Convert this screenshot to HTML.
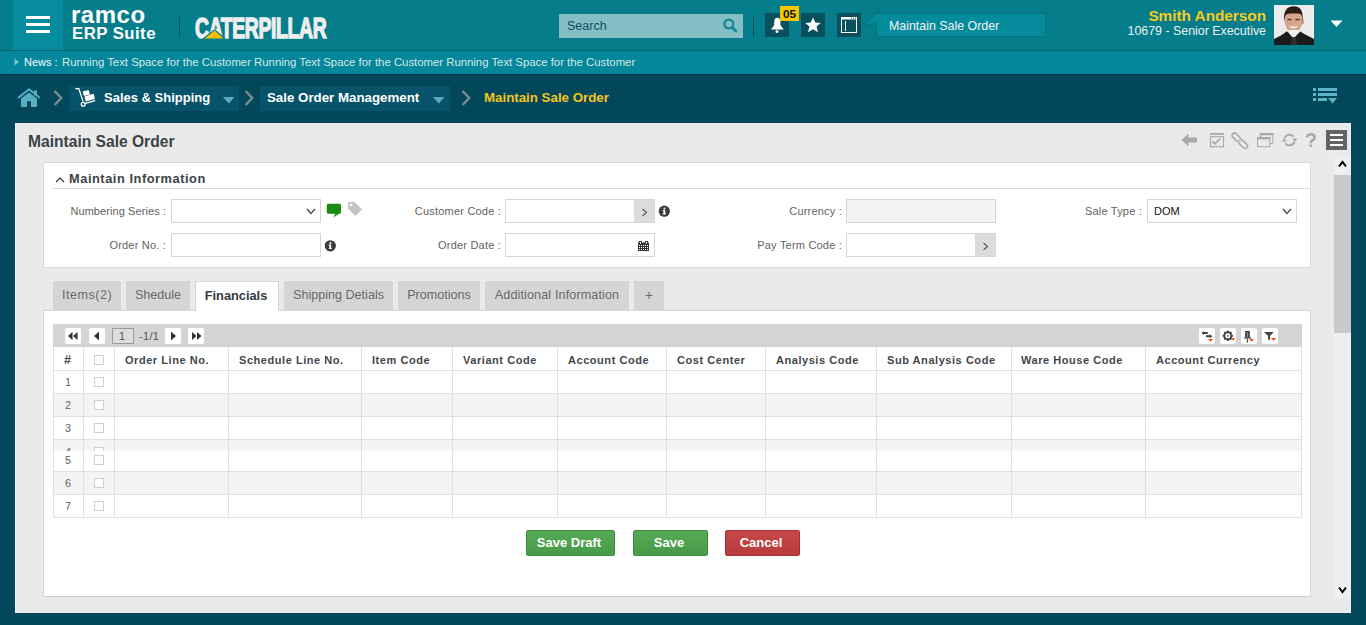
<!DOCTYPE html>
<html><head><meta charset="utf-8">
<style>
*{box-sizing:border-box;margin:0;padding:0}
html,body{width:1366px;height:625px;overflow:hidden;background:#03485a;font-family:"Liberation Sans",sans-serif}
.a{position:absolute}
#hdr{left:0;top:0;width:1366px;height:51px;background:#057d8b;border-bottom:1px solid #05616c}
#ham{left:13px;top:0;width:50px;height:50px;background:#068d9d}
#ham i{position:absolute;left:13px;width:24px;height:3px;background:#fff}
.txt{white-space:nowrap}
#news{left:0;top:51px;width:1366px;height:24px;background:#04879a;border-bottom:1px solid #023340}
#bc{left:0;top:74px;width:1366px;height:49px;background:#03485a}
.crumbbox{background:#07546a;height:25px}
#panel{left:15px;top:123px;width:1336px;height:490px;background:#eaeaea;border-left:1px solid #f6f6f6}
.lbl{position:absolute;font-size:11px;color:#626262;white-space:nowrap;text-align:right;letter-spacing:0.2px;margin-top:1px}
.inp{position:absolute;height:24px;width:150px;background:#fff;border:1px solid #d6d6d6}
.tab{position:absolute;top:281px;height:29px;background:#d5d5d5;font-size:12.6px;color:#6a6a6a;text-align:center;line-height:29px;white-space:nowrap}
.gh{position:absolute;top:354px;font-size:11px;font-weight:bold;color:#3f474c;letter-spacing:0.55px;white-space:nowrap}
.vl{position:absolute;top:347px;width:1px;height:170px;background:#e0e0e0}
.hl{position:absolute;left:53px;width:1248px;height:1px;background:#e0e0e0}
.rn{position:absolute;left:65px;font-size:11px;color:#626262;white-space:nowrap}
.cb{position:absolute;left:94px;width:10px;height:10px;border:1px solid #cfcfcf;background:#fff}
.btn{position:absolute;top:530px;height:26px;border-radius:2px;color:#fff;font-weight:bold;font-size:13px;text-align:center;line-height:23px;padding-right:3px}
.g{background:linear-gradient(#56aa56,#479a47);border:1px solid #3d8c3d}
.r{background:linear-gradient(#c84848,#b83b3b);border:1px solid #a83232}
.pbtn{position:absolute;top:328px;width:16px;height:16px;background:#fff;border-radius:2px}
</style></head><body>

<!-- HEADER -->
<div id="hdr" class="a"></div>
<div id="ham" class="a"><i style="top:16px"></i><i style="top:23px"></i><i style="top:30px"></i></div>
<div class="a txt" style="left:71px;top:1px;font-size:24px;font-weight:bold;color:#fff;line-height:28px;letter-spacing:0.5px">ramco</div>
<div class="a txt" style="left:72px;top:25px;font-size:16.8px;letter-spacing:0.45px;font-weight:bold;color:#fff;line-height:17px">ERP Suite</div>
<div class="a" style="left:179px;top:17px;width:1px;height:20px;background:#0b4f5c"></div>
<!-- caterpillar -->
<div class="a txt" style="left:195px;top:12px;font-size:29.5px;font-weight:bold;color:#eeeeee;line-height:31px;transform:scaleX(0.655);-webkit-text-stroke:1.5px #eeeeee;transform-origin:0 0;letter-spacing:-0.5px">CATERPILLAR</div>
<svg class="a" style="left:200px;top:26px" width="30" height="14"><polygon points="3,13 14.7,3.8 25,13" fill="#f5c000" stroke="#067f8c" stroke-width="1.2"/></svg>

<!-- search -->
<div class="a" style="left:559px;top:14px;width:184px;height:24px;background:#84bfc6"></div>
<div class="a txt" style="left:567px;top:19px;font-size:12.5px;color:#0f4f5c;line-height:15px">Search</div>
<svg class="a" style="left:720px;top:17px" width="20" height="20"><circle cx="8.8" cy="7" r="4.4" fill="none" stroke="#168592" stroke-width="2.3"/><line x1="12" y1="10.3" x2="15.8" y2="14" stroke="#168592" stroke-width="2.8" stroke-linecap="round"/></svg>
<div class="a" style="left:753px;top:17px;width:1px;height:20px;background:#0b4f5c"></div>
<!-- bell -->
<div class="a" style="left:765px;top:13px;width:24px;height:24px;background:#0a4f5e"></div>
<svg class="a" style="left:765px;top:13px" width="24" height="24"><path d="M12.3 4.8 C10.2 4.8 9.2 6.5 9.2 9 L9.2 12.3 L6 16.4 L18.8 16.4 L15.5 12.3 L15.5 9 C15.5 6.5 14.5 4.8 12.3 4.8 Z" fill="#fff"/><circle cx="12" cy="18.4" r="1.5" fill="#fff"/></svg>
<div class="a txt" style="left:780px;top:6px;width:19px;height:15px;background:#f6c700;color:#111;font-size:11.8px;font-weight:bold;text-align:center;line-height:16px">05</div>
<!-- star -->
<div class="a" style="left:801px;top:13px;width:24px;height:24px;background:#0a4f5e"></div>
<svg class="a" style="left:801px;top:13px" width="24" height="24"><polygon points="12,4.5 14.3,9.6 19.8,10 15.6,13.6 16.9,19.2 12,16.2 7.1,19.2 8.4,13.6 4.2,10 9.7,9.6" fill="#fff"/></svg>
<!-- window -->
<div class="a" style="left:837px;top:13px;width:24px;height:24px;background:#0a4f5e"></div>
<svg class="a" style="left:837px;top:13px" width="24" height="24"><rect x="4.5" y="4.5" width="15" height="15" fill="none" stroke="#fff" stroke-width="1"/><rect x="4" y="4" width="16" height="2.5" fill="#fff"/><rect x="8" y="8" width="1" height="10" fill="#fff"/><rect x="14" y="4.8" width="1" height="1" fill="#0a4f5e"/><rect x="16" y="4.8" width="1" height="1" fill="#0a4f5e"/><rect x="18" y="4.8" width="1" height="1" fill="#0a4f5e"/></svg>
<!-- tab pointer -->
<svg class="a" style="left:860px;top:12px" width="190" height="26"><path d="M16.5 1.5 L185.5 1.5 L185.5 24.5 L16.5 24.5 L16.5 10.8 L3.2 14.2 Z" fill="#058c9c" stroke="#06707c" stroke-width="1"/></svg>
<div class="a txt" style="left:889px;top:19px;font-size:12.4px;color:#f2f2f2;line-height:15px">Maintain Sale Order</div>
<!-- user -->
<div class="a txt" style="left:1066px;width:200px;top:7px;text-align:right;font-size:15.3px;font-weight:bold;color:#f7cb1e;line-height:17px">Smith Anderson</div>
<div class="a txt" style="left:1066px;width:200px;top:24px;text-align:right;font-size:12.4px;color:#f0f0f0;line-height:15px">10679 - Senior Executive</div>
<svg class="a" style="left:1274px;top:5px" width="40" height="40"><rect width="40" height="40" fill="#ececec"/><ellipse cx="19.5" cy="16" rx="8.8" ry="11.6" fill="#d7a58c"/><ellipse cx="28.3" cy="16.5" rx="1.6" ry="3" fill="#c99479"/><path d="M10.2 17 C9 6 13 1.3 19.5 1.3 C26 1.3 29.5 5 28.6 16 C28 11.5 27.5 9 25.5 8.8 C22 8.4 17 8.4 13.5 9 C11.5 9.5 10.8 12 10.2 17 Z" fill="#2b1d16"/><rect x="13.5" y="13.8" width="4" height="1.5" fill="#5a3a2c"/><rect x="21.5" y="13.8" width="4" height="1.5" fill="#5a3a2c"/><path d="M15 21 Q19.5 25.5 24 21 Q19.5 22.5 15 21 Z" fill="#fff"/><path d="M0 40 L0 34 C4 32 9 30 12.5 26.5 L26.5 26.5 C30 29.5 35 31 40 34 L40 40 Z" fill="#1c1c1c"/><polygon points="13.2,26.2 19.5,33.5 26.4,26.2 23.5,25 16,25" fill="#f2f2f2"/><polygon points="18,32 21.5,32 23,40 16.5,40" fill="#2e2e2e"/></svg>
<svg class="a" style="left:1330px;top:20px" width="13" height="8"><polygon points="0.5,0.5 12.5,0.5 6.5,7" fill="#fff"/></svg>

<!-- NEWS -->
<div id="news" class="a"></div>
<svg class="a" style="left:14px;top:58px" width="6" height="8"><polygon points="0.5,0.5 5,4 0.5,7.5" fill="#7fc3cb"/></svg>
<div class="a txt" style="left:24px;top:56px;font-size:11px;color:#fff;line-height:13px">News :</div>
<div class="a txt" style="left:62px;top:56px;font-size:11.35px;color:#d9e6e7;line-height:13px">Running Text Space for the Customer Running Text Space for the Customer Running Text Space for the Customer</div>

<!-- BREADCRUMB -->
<svg class="a" style="left:17px;top:87px" width="24" height="21"><polyline points="1,11 12,2.3 23,11" fill="none" stroke="#5aaec4" stroke-width="1.9" stroke-linejoin="miter"/><rect x="17" y="3.5" width="3" height="5" fill="#5aaec4"/><path d="M4 11.6 L12 5.4 L20 11.6 L20 19 Q20 20 19 20 L14 20 L14 14.2 L10 14.2 L10 20 L5 20 Q4 20 4 19 Z" fill="#5aaec4"/></svg>
<svg class="a" style="left:53px;top:90px" width="10" height="16"><polyline points="1.5,1 8.2,8 1.5,15" fill="none" stroke="#7b8a90" stroke-width="2.5"/></svg>
<div class="a crumbbox" style="left:69px;top:86px;width:170px"></div>
<svg class="a" style="left:75px;top:86px" width="22" height="22"><path d="M0.3 2.6 L3.8 2.6 L8.1 15.6" fill="none" stroke="#fff" stroke-width="1.3"/><circle cx="8.2" cy="18.2" r="1.9" fill="none" stroke="#fff" stroke-width="1.3"/><line x1="9.6" y1="17.6" x2="20.2" y2="14.6" stroke="#fff" stroke-width="1.3"/><polygon points="7.6,5.6 13.6,3.9 15,8.4 9,10.1" fill="#fff"/><polygon points="9.4,10.4 18.6,7.8 20,13 10.8,15.6" fill="#fff"/></svg>
<div class="a txt" style="left:104px;top:90px;font-size:13px;font-weight:bold;color:#fff;line-height:15px">Sales &amp; Shipping</div>
<svg class="a" style="left:223px;top:97px" width="12" height="7"><polygon points="0,0 11.5,0 5.75,6.5" fill="#5aa9bd"/></svg>
<svg class="a" style="left:244px;top:90px" width="10" height="16"><polyline points="1.5,1 8.2,8 1.5,15" fill="none" stroke="#7b8a90" stroke-width="2.5"/></svg>
<div class="a crumbbox" style="left:260px;top:86px;width:190px"></div>
<div class="a txt" style="left:267px;top:90px;font-size:13.3px;font-weight:bold;color:#fff;line-height:15px">Sale Order Management</div>
<svg class="a" style="left:433px;top:97px" width="12" height="7"><polygon points="0,0 11.5,0 5.75,6.5" fill="#5aa9bd"/></svg>
<svg class="a" style="left:461px;top:90px" width="10" height="16"><polyline points="1.5,1 8.2,8 1.5,15" fill="none" stroke="#7b8a90" stroke-width="2.5"/></svg>
<div class="a txt" style="left:484px;top:90px;font-size:13.3px;font-weight:bold;color:#f5c51c;line-height:15px">Maintain Sale Order</div>
<svg class="a" style="left:1313px;top:88px" width="24" height="16"><g fill="#5ab3c6"><rect x="0" y="0" width="3" height="3"/><rect x="0" y="5" width="3" height="3"/><rect x="0" y="10" width="3" height="3"/><rect x="5" y="0" width="19" height="3"/><rect x="5" y="5" width="19" height="3"/><rect x="5" y="10" width="9" height="3"/><polygon points="15,10 24,10 19.5,15.5"/></g></svg>

<!-- PANEL -->
<div id="panel" class="a"></div>
<div class="a txt" style="left:28px;top:133px;font-size:15.6px;font-weight:bold;color:#3c4347;line-height:17px">Maintain Sale Order</div>

<!-- panel toolbar icons -->
<svg class="a" style="left:1181px;top:133px" width="17" height="14"><polygon points="0.5,7 7.5,0.5 7.5,4.5 16,4.5 16,9.5 7.5,9.5 7.5,13.5" fill="#a9a9a9"/></svg>
<svg class="a" style="left:1209px;top:133px" width="16" height="15"><rect x="1" y="0" width="14" height="1.8" fill="#a9a9a9"/><rect x="1.5" y="3.7" width="13" height="10.1" fill="none" stroke="#a9a9a9" stroke-width="1.1"/><polyline points="3.4,8.4 5.8,10.8 11.2,5.6" fill="none" stroke="#a9a9a9" stroke-width="1.8"/></svg>
<svg class="a" style="left:1231px;top:132px" width="18" height="18"><g fill="none" stroke="#a9a9a9" stroke-width="1.6" transform="rotate(-45 9 9)"><rect x="6.6" y="-1.2" width="4.8" height="10" rx="2.4"/><rect x="6.6" y="8.6" width="4.8" height="10" rx="2.4"/></g><line x1="7.6" y1="10.4" x2="10.4" y2="7.6" stroke="#eaeaea" stroke-width="1"/></svg>
<svg class="a" style="left:1257px;top:133px" width="17" height="15"><rect x="3.5" y="0.5" width="12.4" height="10" fill="none" stroke="#a9a9a9" stroke-width="1"/><rect x="3" y="0" width="13.4" height="2.3" fill="#a9a9a9"/><rect x="0.5" y="4.5" width="12.4" height="9.2" fill="#eaeaea" stroke="#a9a9a9" stroke-width="1"/><rect x="0" y="4" width="13.4" height="2.4" fill="#a9a9a9"/></svg>
<svg class="a" style="left:1281px;top:133px" width="17" height="15"><g fill="none" stroke="#a9a9a9" stroke-width="1.9"><path d="M3.4 5.4 A5.4 5.4 0 0 1 12.6 3.6"/><path d="M13.6 8.6 A5.4 5.4 0 0 1 4.4 10.4"/></g><polygon points="11.2,5.6 16.4,5.6 13.8,8.8" fill="#a9a9a9"/><polygon points="0.6,8.4 5.8,8.4 3.2,5.2" fill="#a9a9a9"/></svg>
<svg class="a" style="left:1305px;top:133px" width="12" height="15"><path d="M2.1 4.4 C2.1 2 3.8 1.3 5.8 1.3 C8.1 1.3 9.7 2.5 9.7 4.4 C9.7 6.3 7.8 6.9 6.8 7.8 C6.1 8.4 5.8 9 5.8 10.3" fill="none" stroke="#a9a9a9" stroke-width="2.6"/><rect x="4.4" y="11.6" width="2.8" height="2.4" fill="#a9a9a9"/></svg>
<div class="a" style="left:1326px;top:130px;width:21px;height:20px;background:#636363"></div>
<div class="a" style="left:1330px;top:134px;width:13px;height:2px;background:#fff"></div>
<div class="a" style="left:1330px;top:139px;width:13px;height:2px;background:#fff"></div>
<div class="a" style="left:1330px;top:144px;width:13px;height:2px;background:#fff"></div>

<!-- scrollbar -->
<div class="a" style="left:1334px;top:156px;width:17px;height:442px;background:#efefef"></div>
<div class="a" style="left:1334px;top:175px;width:17px;height:158px;background:#c9c9c9"></div>
<svg class="a" style="left:1338px;top:160px" width="9" height="8"><polyline points="1,6.5 4.5,2 8,6.5" fill="none" stroke="#000" stroke-width="2"/></svg>
<svg class="a" style="left:1338px;top:586px" width="9" height="8"><polyline points="1,1.5 4.5,6 8,1.5" fill="none" stroke="#000" stroke-width="2"/></svg>

<!-- section: maintain information -->
<div class="a" style="left:43px;top:162px;width:1268px;height:106px;background:#fff;border:1px solid #d9d9d9"></div>
<svg class="a" style="left:55px;top:176px" width="10" height="7"><polyline points="1,6 5,2 9,6" fill="none" stroke="#444" stroke-width="1.3"/></svg>
<div class="a txt" style="left:69px;top:171px;font-size:12.8px;font-weight:bold;color:#3c4347;line-height:15px;letter-spacing:0.55px">Maintain Information</div>
<div class="a" style="left:53px;top:188px;width:1257px;height:1px;background:#dcdcdc"></div>

<div class="lbl" style="left:0px;width:166px;top:204px;letter-spacing:0.08px">Numbering Series :</div>
<div class="inp" style="left:171px;top:199px"></div>
<svg class="a" style="left:306px;top:208px" width="10" height="7"><polyline points="1,1 5,5.5 9,1" fill="none" stroke="#444" stroke-width="1.2"/></svg>
<svg class="a" style="left:326px;top:203px" width="16" height="16"><path d="M2.3 0.8 L13.5 0.8 Q15 0.8 15 2.3 L15 9.2 Q15 10.7 13.5 10.7 L13 10.7 L7.3 14.6 L9.3 10.7 L2.3 10.7 Q0.8 10.7 0.8 9.2 L0.8 2.3 Q0.8 0.8 2.3 0.8 Z" fill="#1b8c12"/></svg>
<svg class="a" style="left:347px;top:201px" width="16" height="16"><path d="M1 1 L7.5 1 L15 8.5 L8.5 15 L1 7.5 Z" fill="#c3c3c3"/><circle cx="4" cy="4" r="1.3" fill="#fff"/></svg>
<div class="lbl" style="left:0px;width:166px;top:238px">Order No. :</div>
<div class="inp" style="left:171px;top:233px"></div>
<svg class="a" style="left:324px;top:240px" width="12" height="12"><circle cx="6.3" cy="5.8" r="5.6" fill="#3a3a3a"/><g fill="#fff"><circle cx="6.4" cy="3" r="1"/><path d="M4.6 4.6 L7.2 4.6 L7.2 8.2 L8 8.2 L8 9 L4.6 9 L4.6 8.2 L5.4 8.2 L5.4 5.4 L4.6 5.4 Z"/></g></svg>

<div class="lbl" style="left:300px;width:201px;top:204px">Customer Code :</div>
<div class="inp" style="left:505px;top:199px"></div>
<div class="a" style="left:634px;top:200px;width:20px;height:22px;background:#dcdcdc"></div>
<svg class="a" style="left:641px;top:208px" width="7" height="9"><polyline points="1.5,1 5.5,4.5 1.5,8" fill="none" stroke="#555" stroke-width="1.1"/></svg>
<svg class="a" style="left:658px;top:205px" width="12" height="12"><circle cx="6.3" cy="6.2" r="5.6" fill="#3a3a3a"/><g fill="#fff"><circle cx="6.4" cy="3.4" r="1"/><path d="M4.6 5 L7.2 5 L7.2 8.6 L8 8.6 L8 9.4 L4.6 9.4 L4.6 8.6 L5.4 8.6 L5.4 5.8 L4.6 5.8 Z"/></g></svg>
<div class="lbl" style="left:300px;width:201px;top:238px">Order Date :</div>
<div class="inp" style="left:505px;top:233px"></div>
<svg class="a" style="left:638px;top:241px" width="11" height="10"><rect x="0" y="1.5" width="11" height="8.5" fill="#333"/><rect x="1" y="0" width="3" height="3" fill="#333"/><rect x="7" y="0" width="3" height="3" fill="#333"/><g fill="#fff"><ellipse cx="2.5" cy="1.8" rx="0.6" ry="1.1"/><ellipse cx="8.5" cy="1.8" rx="0.6" ry="1.1"/><rect x="1" y="4" width="1" height="1"/><rect x="1" y="6" width="1" height="1"/><rect x="1" y="8" width="1" height="1"/><rect x="3" y="4" width="1" height="1"/><rect x="3" y="6" width="1" height="1"/><rect x="3" y="8" width="1" height="1"/><rect x="5" y="4" width="1" height="1"/><rect x="5" y="6" width="1" height="1"/><rect x="5" y="8" width="1" height="1"/><rect x="7" y="4" width="1" height="1"/><rect x="7" y="6" width="1" height="1"/><rect x="7" y="8" width="1" height="1"/><rect x="9" y="4" width="1" height="1"/><rect x="9" y="6" width="1" height="1"/><rect x="9" y="8" width="1" height="1"/></g></svg>

<div class="lbl" style="left:640px;width:202px;top:204px">Currency :</div>
<div class="inp" style="left:846px;top:199px;background:#f4f4f4"></div>
<div class="lbl" style="left:640px;width:202px;top:238px">Pay Term Code :</div>
<div class="inp" style="left:846px;top:233px"></div>
<div class="a" style="left:975px;top:234px;width:20px;height:22px;background:#dcdcdc"></div>
<svg class="a" style="left:982px;top:242px" width="7" height="9"><polyline points="1.5,1 5.5,4.5 1.5,8" fill="none" stroke="#555" stroke-width="1.1"/></svg>

<div class="lbl" style="left:940px;width:202px;top:204px">Sale Type :</div>
<div class="inp" style="left:1147px;top:199px"></div>
<div class="a txt" style="left:1154px;top:205px;font-size:11px;color:#111;line-height:13px">DOM</div>
<svg class="a" style="left:1282px;top:208px" width="10" height="7"><polyline points="1,1 5,5.5 9,1" fill="none" stroke="#444" stroke-width="1.2"/></svg>

<!-- tabs -->
<div class="a" style="left:43px;top:310px;width:1268px;height:287px;background:#fff;border:1px solid #d6d6d6;border-bottom:1px solid #cfcfcf"></div>
<div class="tab" style="left:53px;width:68px;letter-spacing:0.5px">Items(2)</div>
<div class="tab" style="left:126px;width:64px">Shedule</div>
<div class="tab" style="left:195px;top:281px;width:84px;height:30px;background:#fff;border:1px solid #d6d6d6;border-bottom:none;color:#333b40;font-weight:bold;font-size:12.8px;line-height:27px;padding-right:2px">Financials</div>
<div class="tab" style="left:284px;width:109px">Shipping Detials</div>
<div class="tab" style="left:398px;width:82px">Promotions</div>
<div class="tab" style="left:485px;width:144px;letter-spacing:0.12px">Additional Information</div>
<div class="tab" style="left:634px;width:30px;font-size:14px">+</div>

<!-- grid toolbar -->
<div class="a" style="left:53px;top:324px;width:1249px;height:23px;background:#d4d4d4"></div>
<div class="pbtn" style="left:65px"></div>
<svg class="a" style="left:65px;top:328px" width="16" height="16"><polygon points="3,8 7.5,4 7.5,12" fill="#333"/><polygon points="8,8 12.5,4 12.5,12" fill="#333"/></svg>
<div class="pbtn" style="left:89px"></div>
<svg class="a" style="left:89px;top:328px" width="16" height="16"><polygon points="5,8 10,3.5 10,12.5" fill="#333"/></svg>
<div class="a" style="left:112px;top:328px;width:22px;height:16px;background:#dcdcdc;border:1px solid #9a9a9a"></div>
<div class="a txt" style="left:119px;top:330px;font-size:11px;color:#555;line-height:12px">1</div>
<div class="a txt" style="left:139px;top:330px;font-size:11px;color:#555;line-height:12px;letter-spacing:0.3px">-1/1</div>
<div class="pbtn" style="left:165px"></div>
<svg class="a" style="left:165px;top:328px" width="16" height="16"><polygon points="11,8 6,3.5 6,12.5" fill="#333"/></svg>
<div class="pbtn" style="left:188px"></div>
<svg class="a" style="left:188px;top:328px" width="17" height="16"><polygon points="8.5,8 4,4 4,12" fill="#333"/><polygon points="13.5,8 9,4 9,12" fill="#333"/></svg>

<div class="pbtn" style="left:1199px"></div>
<svg class="a" style="left:1199px;top:328px" width="16" height="16"><g fill="#444"><polygon points="2.4,5 5,3 5,7"/><rect x="4.6" y="4" width="4.2" height="2"/><polygon points="13.4,8.2 10.8,6.2 10.8,10.2"/><rect x="7" y="7.2" width="4.2" height="2"/></g><polygon points="9,11 14,11 11.5,13.8" fill="#ff4a00"/></svg>
<div class="pbtn" style="left:1220px"></div>
<svg class="a" style="left:1220px;top:328px" width="16" height="16"><circle cx="7.8" cy="7.8" r="3.5" fill="none" stroke="#444" stroke-width="1.9"/><g fill="#444"><rect x="6.9" y="2.6" width="1.8" height="2" transform="rotate(0 7.8 7.8)"/><rect x="6.9" y="2.6" width="1.8" height="2" transform="rotate(45 7.8 7.8)"/><rect x="6.9" y="2.6" width="1.8" height="2" transform="rotate(90 7.8 7.8)"/><rect x="6.9" y="2.6" width="1.8" height="2" transform="rotate(135 7.8 7.8)"/><rect x="6.9" y="2.6" width="1.8" height="2" transform="rotate(180 7.8 7.8)"/><rect x="6.9" y="2.6" width="1.8" height="2" transform="rotate(225 7.8 7.8)"/><rect x="6.9" y="2.6" width="1.8" height="2" transform="rotate(270 7.8 7.8)"/><rect x="6.9" y="2.6" width="1.8" height="2" transform="rotate(315 7.8 7.8)"/><circle cx="7.8" cy="7.8" r="0.9"/></g><polygon points="11.2,10 15,10 13.1,12.8" fill="#ff4a00"/></svg>
<div class="pbtn" style="left:1241px"></div>
<svg class="a" style="left:1241px;top:328px" width="16" height="16"><g fill="#444"><rect x="4.1" y="3" width="4.7" height="6.4"/><rect x="3.2" y="9.2" width="6.9" height="1.3"/><rect x="5.8" y="10.3" width="1.1" height="4.4"/></g><rect x="5.9" y="4" width="1.1" height="5" fill="#8a8a8a"/><polygon points="8.2,11.1 12.9,11.1 10.55,13.8" fill="#ff4a00"/></svg>
<div class="pbtn" style="left:1262px"></div>
<svg class="a" style="left:1262px;top:328px" width="16" height="16"><polygon points="2,3.9 11.8,3.9 8,8 8,11.8 6.1,11.8 6.1,8" fill="#444"/><polygon points="8.9,9.9 14.3,9.9 11.6,12.7" fill="#ff4a00"/></svg>

<!-- grid -->
<div class="a" style="left:53px;top:347px;width:1249px;height:171px;background:#fff;border:1px solid #e0e0e0;border-top:none"></div>
<div class="a" style="left:54px;top:393px;width:1247px;height:23px;background:#f4f4f4"></div>
<div class="a" style="left:54px;top:440px;width:1247px;height:11px;background:#f4f4f4"></div>
<div class="a" style="left:54px;top:471px;width:1247px;height:23px;background:#f4f4f4"></div>
<div class="hl" style="top:370px"></div>
<div class="hl" style="top:393px"></div>
<div class="hl" style="top:416px"></div>
<div class="hl" style="top:439px"></div>
<div class="hl" style="top:471px"></div>
<div class="hl" style="top:494px"></div>
<div class="vl" style="left:83px"></div>
<div class="vl" style="left:114px"></div>
<div class="vl" style="left:228px"></div>
<div class="vl" style="left:361px"></div>
<div class="vl" style="left:452px"></div>
<div class="vl" style="left:557px"></div>
<div class="vl" style="left:666px"></div>
<div class="vl" style="left:765px"></div>
<div class="vl" style="left:876px"></div>
<div class="vl" style="left:1011px"></div>
<div class="vl" style="left:1145px"></div>

<div class="gh" style="left:64px;font-size:12.5px;top:353px">#</div>
<div class="a" style="left:94px;top:355px;width:10px;height:10px;border:1px solid #cfcfcf;background:#fff"></div>
<div class="gh" style="left:125px">Order Line No.</div>
<div class="gh" style="left:239px">Schedule Line No.</div>
<div class="gh" style="left:372px">Item Code</div>
<div class="gh" style="left:463px">Variant Code</div>
<div class="gh" style="left:568px">Account Code</div>
<div class="gh" style="left:677px">Cost Center</div>
<div class="gh" style="left:776px">Analysis Code</div>
<div class="gh" style="left:887px">Sub Analysis Code</div>
<div class="gh" style="left:1021px">Ware House Code</div>
<div class="gh" style="left:1156px">Account Currency</div>

<div class="rn" style="top:376px">1</div><div class="cb" style="top:377px"></div>
<div class="rn" style="top:399px">2</div><div class="cb" style="top:400px"></div>
<div class="rn" style="top:422px">3</div><div class="cb" style="top:423px"></div>
<div class="a" style="left:54px;top:440px;width:60px;height:11px;overflow:hidden"><div class="rn" style="left:11px;top:6px">4</div><div class="cb" style="left:40px;top:7px"></div></div>
<div class="rn" style="top:454px">5</div><div class="cb" style="top:455px"></div>
<div class="rn" style="top:477px">6</div><div class="cb" style="top:478px"></div>
<div class="rn" style="top:500px">7</div><div class="cb" style="top:501px"></div>

<!-- buttons -->
<div class="btn g" style="left:526px;width:89px">Save Draft</div>
<div class="btn g" style="left:633px;width:75px">Save</div>
<div class="btn r" style="left:725px;width:75px">Cancel</div>
</body></html>
